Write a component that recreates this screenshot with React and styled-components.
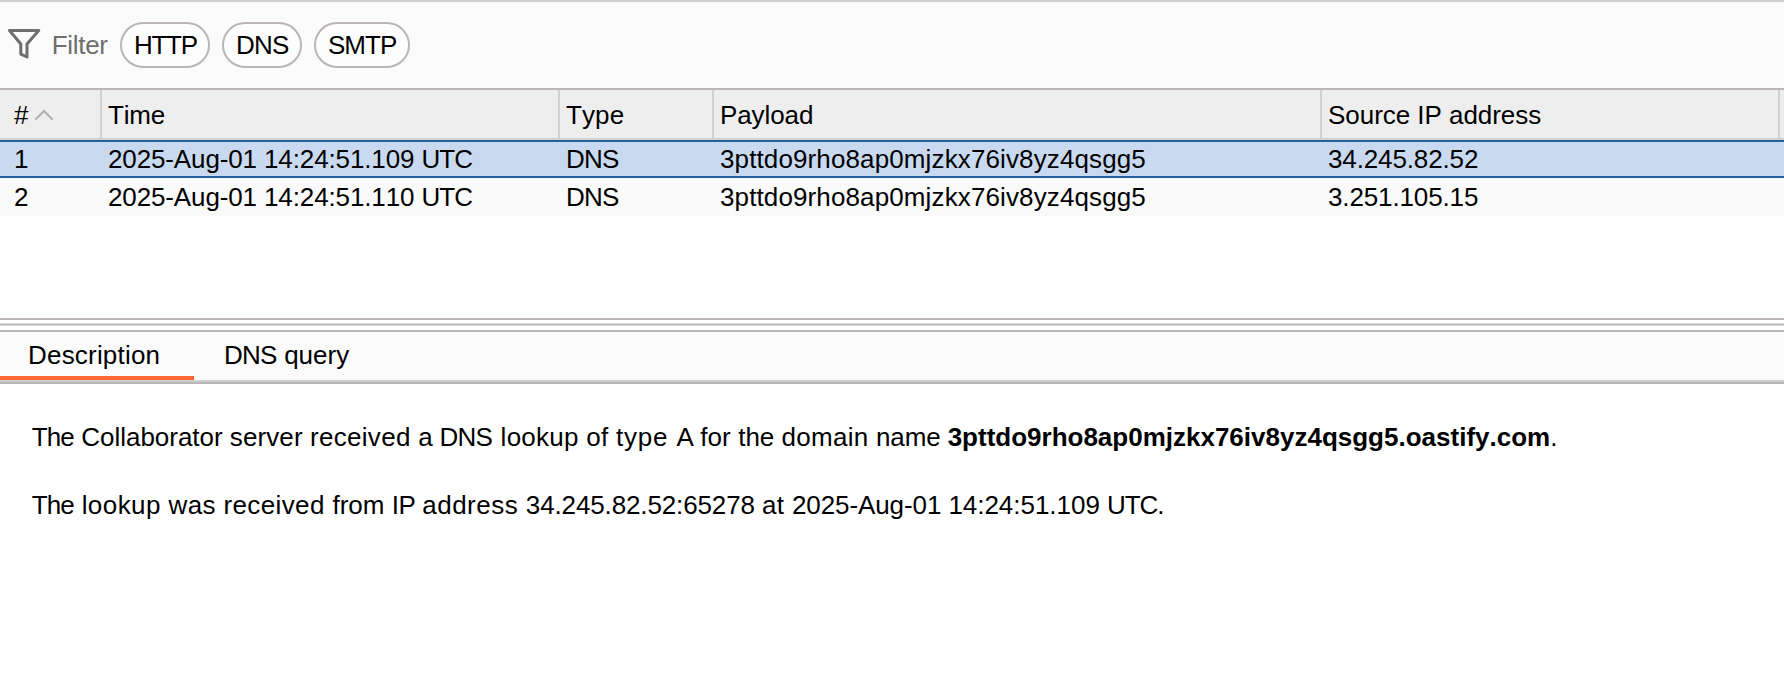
import React from "react";
import styled, { createGlobalStyle } from "styled-components";

const GlobalStyle = createGlobalStyle`
  * { box-sizing: border-box; }
  body {
    margin: 0;
    background: #fff;
    color: #000;
    font-family: "Liberation Sans", Arial, sans-serif;
    font-size: 26px;
    line-height: 30px;
    font-kerning: none;
    overflow: hidden;
  }
`;

const Window = styled.main`
  width: 1784px;
  height: 680px;
  display: flex;
  flex-direction: column;
  border-top: 2px solid #d2d2d2;
`;

const Toolbar = styled.div`
  height: 88px;
  flex: none;
  display: flex;
  align-items: flex-start;
  padding: 20px 0 0 7px;
  background: #fbfbfb;
  border-bottom: 2px solid #bbb5b5;
`;

const FunnelIcon = styled.svg`
  width: 34px;
  height: 32px;
  flex: none;
  margin-top: 6px;
`;

const FilterLabel = styled.span`
  width: 68px;
  padding: 8px 0 0 10.7px;
  color: #6e6e6e;
  white-space: nowrap;
`;

const Label = styled.span`
  white-space: pre;
  letter-spacing: ${(p) => p.$track || 0}px;
`;

const Pills = styled.div`
  display: flex;
  gap: 12px;
  margin-left: 11px;
`;

const Pill = styled.button`
  width: ${(p) => p.$width}px;
  height: 46px;
  display: flex;
  padding: 6px 0 0 12px;
  border: 2px solid #bbb5b5;
  border-radius: 23px;
  background: #fdfdfd;
  color: #000;
  font: inherit;
  font-kerning: none;
`;

const columns = "102px 458px 154px 608px 458px 1fr";

const HeaderRow = styled.div`
  display: grid;
  grid-template-columns: ${columns};
  height: 50px;
  flex: none;
  background: #eee;
  border-bottom: 2px solid #d2d2d2;
`;

const HeaderCell = styled.div`
  display: flex;
  padding: 10px 0 0 ${(p) => (p.$first ? 14 : 6)}px;
  border-right: ${(p) => (p.$last ? "none" : "2px solid #d2d2d2")};
`;

const SortIcon = styled.svg`
  width: 20px;
  height: 12px;
  margin: 9px 0 0 6px;
`;

const Row = styled.div`
  display: grid;
  grid-template-columns: ${columns};
  height: 38px;
  flex: none;
  background: ${(p) => (p.$selected ? "#c9daf0" : "#fafafa")};
  border: solid ${(p) => (p.$selected ? "#24629f" : "transparent")};
  border-width: 2px 0;
`;

const Cell = styled.div`
  padding: 2px 0 0 ${(p) => (p.$first ? 14 : 6)}px;
  white-space: nowrap;
`;

const TableSpace = styled.div`
  height: 102px;
  flex: none;
`;

const Splitter = styled.div`
  height: 14px;
  flex: none;
  padding-top: 3px;
  border: solid #bbb5b5;
  border-width: 2px 0;
`;

const Grip = styled.div`
  height: 3px;
  background: #bbb5b5;
  border: solid #dddada;
  border-width: 1px 0;
`;

const Tabs = styled.div`
  height: 52px;
  flex: none;
  display: flex;
  background: #fbfbfb;
  border-bottom: 2px solid #bbb5b5;
  box-shadow: inset 0 -2px #ccd0ce;
`;

const Tab = styled.button`
  width: ${(p) => p.$width}px;
  height: 48px;
  display: flex;
  padding: 8px 0 0 ${(p) => p.$pad}px;
  border: 0;
  border-bottom: 4px solid ${(p) => (p.$active ? "#ff6633" : "transparent")};
  background: none;
  color: #000;
  font: inherit;
  font-kerning: none;
`;

const Details = styled.section`
  padding: 38px 31.8px;
`;

const Line = styled.p`
  margin: 0 0 38px;
  white-space: nowrap;
`;

// Each entry is a piece of text with its letter spacing in pixels.
const Tracked = ({ parts }) =>
  parts.map(([text, track], i) => (
    <Label key={i} $track={track}>{text}</Label>
  ));

const filters = [
  { name: "HTTP", width: 90, track: -1.3 },
  { name: "DNS", width: 80, track: -0.8 },
  { name: "SMTP", width: 96, track: -1 },
];

const payload = "3pttdo9rho8ap0mjzkx76iv8yz4qsgg5";

const rows = [
  { id: 1, date: "2025-Aug-01 ", time: "14:24:51.109 ", ip: "34.245.82.52" },
  { id: 2, date: "2025-Aug-01 ", time: "14:24:51.110 ", ip: "3.251.105.15" },
];

const lookupText = [
  ["The", -0.9],
  [" ", 0.2],
  ["Collaborator ", -0.03],
  ["server ", 0.1],
  ["received ", 0.3],
  ["a ", -0.2],
  ["DNS", -0.8],
  [" ", 1.4],
  ["lookup ", 0.26],
  ["of ", 0.27],
  ["type ", 0.8],
  ["A ", -0.4],
  ["for ", 0.12],
  ["the ", 0],
  ["domain ", 0.27],
  ["name ", -0.12],
];

const sourceText = [
  ["The", -0.9],
  [" ", 0.5],
  ["lookup ", 0.43],
  ["was ", 0.37],
  ["received ", 0.38],
  ["from ", 0.04],
  ["IP ", -0.43],
  ["address ", 0.47],
  ["34.245.82.52:65278 ", -0.13],
  ["at ", 0.4],
  ["2025-Aug-01 ", -0.1],
  ["14:24:51.109 ", -0.03],
  ["UTC.", -1.1],
];

export default function App() {
  return (
    <Window>
      <GlobalStyle />
      <Toolbar>
        <FunnelIcon viewBox="0 0 34 32" fill="none" stroke="#6e6e6e" strokeWidth="3" strokeLinejoin="round">
          <path d="M2.5 2.5H31.8L20 16V29L13.8 26.2V16Z" />
        </FunnelIcon>
        <FilterLabel><Label $track={-0.3}>Filter</Label></FilterLabel>
        <Pills>
          {filters.map((f) => (
            <Pill key={f.name} $width={f.width}>
              <Label $track={f.track}>{f.name}</Label>
            </Pill>
          ))}
        </Pills>
      </Toolbar>
      <HeaderRow>
        <HeaderCell $first>
          <Label>#</Label>
          <SortIcon viewBox="0 0 20 12" fill="none" stroke="#afafaf" strokeWidth="2">
            <path d="M1.5 10.5L10 2L18.5 10.5" />
          </SortIcon>
        </HeaderCell>
        <HeaderCell><Label $track={-0.2}>Time</Label></HeaderCell>
        <HeaderCell><Label $track={0.1}>Type</Label></HeaderCell>
        <HeaderCell><Label $track={-0.1}>Payload</Label></HeaderCell>
        <HeaderCell><Label $track={-0.04}>Source IP address</Label></HeaderCell>
        <HeaderCell $last />
      </HeaderRow>
      {rows.map((r, i) => (
        <Row key={r.id} $selected={i === 0}>
          <Cell $first><Label>{r.id}</Label></Cell>
          <Cell><Tracked parts={[[r.date, -0.13], [r.time, -0.12], ["UTC", -1]]} /></Cell>
          <Cell><Label $track={-0.8}>DNS</Label></Cell>
          <Cell><Label $track={0.12}>{payload}</Label></Cell>
          <Cell><Label $track={-0.13}>{r.ip}</Label></Cell>
        </Row>
      ))}
      <TableSpace />
      <Splitter><Grip /></Splitter>
      <Tabs>
        <Tab $active $width={194} $pad={28}><Label $track={0.2}>Description</Label></Tab>
        <Tab $width={184} $pad={30}><Tracked parts={[["DNS", -0.8], [" ", 0.4], ["query", 0]]} /></Tab>
      </Tabs>
      <Details>
        <Line>
          <Tracked parts={lookupText} />
          <Label as="strong">{payload}.oastify.com</Label>.
        </Line>
        <Line>
          <Tracked parts={sourceText} />
        </Line>
      </Details>
    </Window>
  );
}
